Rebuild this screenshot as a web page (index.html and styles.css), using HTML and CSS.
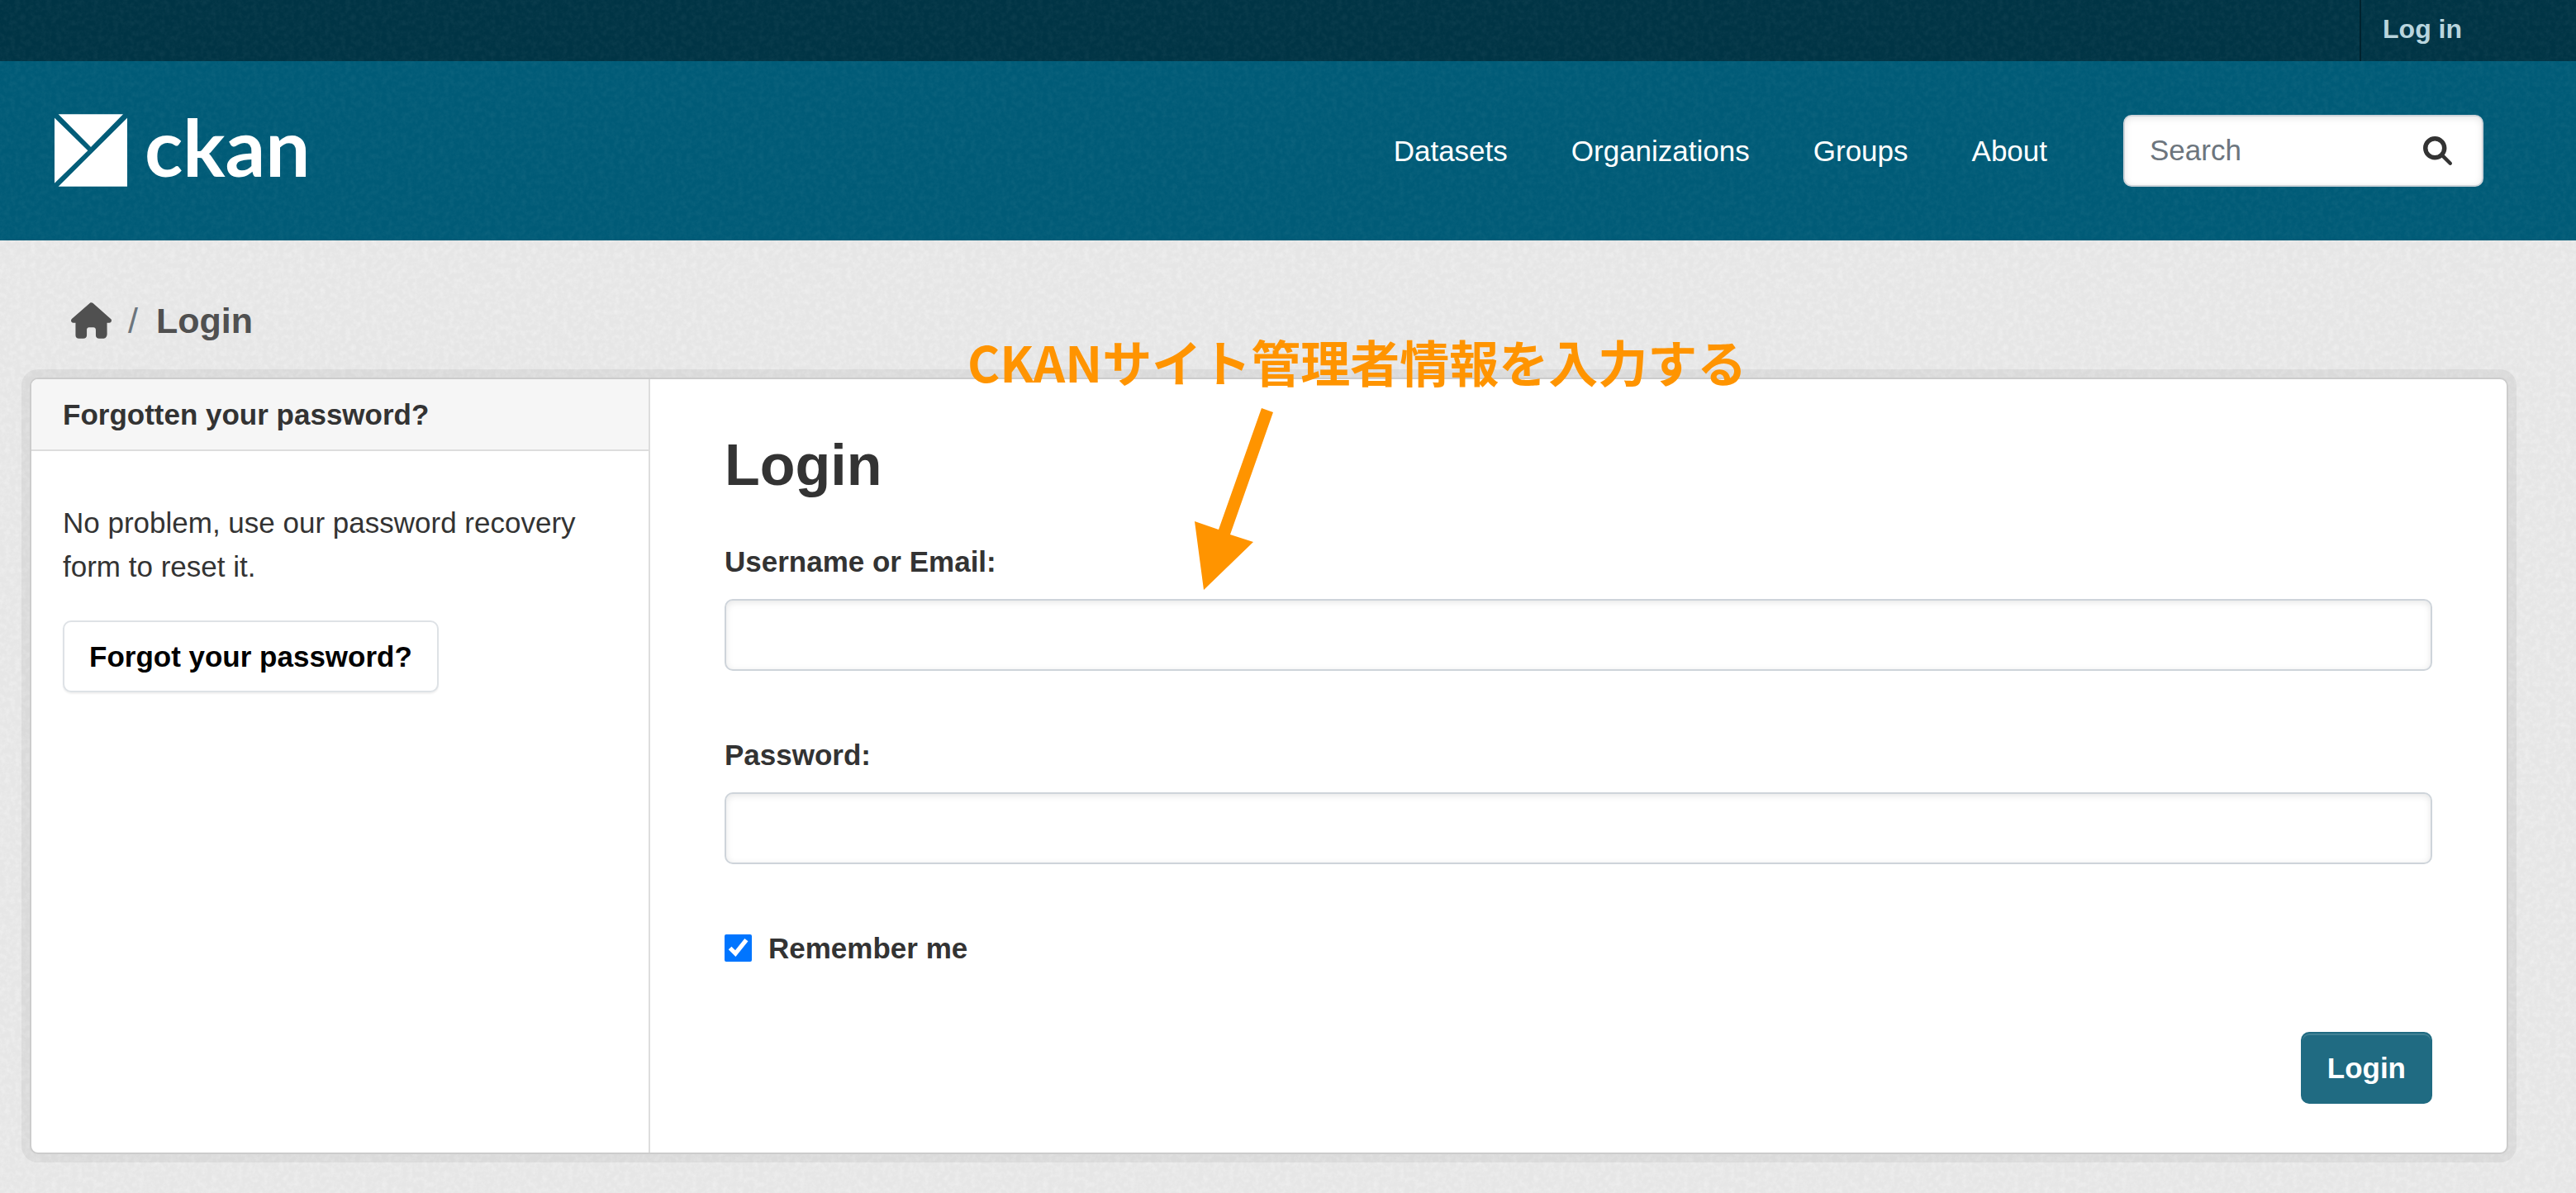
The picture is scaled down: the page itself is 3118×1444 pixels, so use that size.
FILE: index.html
```html
<!DOCTYPE html>
<html lang="en">
<head>
<meta charset="utf-8">
<meta name="viewport" content="width=device-width, initial-scale=1">
<title>Login - CKAN</title>
<link rel="stylesheet" href="styles.css">
</head>
<body>
<div class="account-bar">
  <a class="account-link" href="#">Log in</a>
</div>

<header class="masthead">
  <a class="logo" href="#">
    <svg class="logo-mark" viewBox="0 0 264 264" aria-hidden="true">
      <path d="M14 1H249L132 120ZM0 14L121 133L0 251ZM264 14V263H14Z"/>
    </svg>
    <span class="logo-name">ckan</span>
  </a>
  <div class="masthead-right">
    <nav class="main-nav">
      <a href="#">Datasets</a>
      <a href="#">Organizations</a>
      <a href="#">Groups</a>
      <a href="#">About</a>
    </nav>
    <form class="site-search">
      <input class="search-input" type="search" placeholder="Search" aria-label="Search">
      <button class="search-button" type="button" aria-label="Submit search">
        <svg class="search-icon" viewBox="0 0 512 512" aria-hidden="true">
          <path d="M416 208c0 45.900-14.900 88.300-40 122.700L502.600 457.400c12.500 12.500 12.500 32.800 0 45.300s-32.800 12.500-45.300 0L330.700 376c-34.400 25.200-76.800 40-122.700 40C93.100 416 0 322.900 0 208S93.100 0 208 0S416 93.100 416 208zM208 336a128 128 0 1 0 0-256 128 128 0 1 0 0 256z"/>
        </svg>
      </button>
    </form>
  </div>
</header>

<nav class="toolbar" aria-label="Breadcrumb">
  <a class="home" href="#" aria-label="Home">
    <svg class="home-icon" viewBox="0 0 576 512" aria-hidden="true">
      <path d="M575.800 255.500c0 18-15 32.100-32 32.100h-32l.7 160.200c0 35.300-20 64.200-48 64.200H400c-28 0-48-20-48-44V384c0-17.700-14.300-32-32-32H256c-17.700 0-32 14.300-32 32v84c0 24-20 44-48 44H112c-28 0-48-20-48-48V287.600H32c-18 0-32-14-32-32.100c0-9 3-17 10-24L266.400 8c7-7 15-8 22-8s15 2 21 7L564.800 231.500c8 7 12 15 11 24z"/>
    </svg>
  </a>
  <span class="separator">/</span>
  <a class="crumb" href="#">Login</a>
</nav>

<div class="wrapper">
  <aside class="sidebar">
    <h2 class="sidebar-heading">Forgotten your password?</h2>
    <div class="sidebar-content">
      <p class="sidebar-text">No problem, use our password recovery form to reset it.</p>
      <a class="button button-light" href="#">Forgot your password?</a>
    </div>
  </aside>
  <main class="primary">
    <h1 class="page-heading">Login</h1>
    <form class="login-form">
      <div class="field">
        <label for="username">Username or Email:</label>
        <input class="text-input" id="username" type="text">
      </div>
      <div class="field">
        <label for="password">Password:</label>
        <input class="text-input" id="password" type="password">
      </div>
      <div class="remember">
        <input class="tick" id="remember" type="checkbox" checked>
        <label for="remember">Remember me</label>
      </div>
      <div class="actions">
        <button class="button button-primary" type="button">Login</button>
      </div>
    </form>
    <div class="note">
      <p class="note-text" lang="ja">CKANサイト管理者情報を入力する</p>
      <svg class="note-arrow" viewBox="0 0 96 220" aria-hidden="true">
        <path d="M81 0L95 5L43 153L71 162L11 220L0 137L29 147Z"/>
      </svg>
    </div>
  </main>
</div>
</body>
</html>
```
FILE: styles.css
```css
:root {
  --text: #333;
  --line: #ddd;
  --field-line: #ced4da;
  --grain: url("data:image/svg+xml,%3Csvg xmlns='http://www.w3.org/2000/svg' width='400' height='400'%3E%3Cfilter id='g' x='0' y='0' width='100%25' height='100%25'%3E%3CfeTurbulence type='fractalNoise' baseFrequency='.16' numOctaves='3' seed='4' stitchTiles='stitch'/%3E%3CfeColorMatrix values='0 0 0 0 1 0 0 0 0 1 0 0 0 0 1 1.6 0 0 0 -.62'/%3E%3C/filter%3E%3Crect width='400' height='400' filter='url(%23g)' opacity='.4'/%3E%3C/svg%3E");
  --grain-soft: url("data:image/svg+xml,%3Csvg xmlns='http://www.w3.org/2000/svg' width='400' height='400'%3E%3Cfilter id='g' x='0' y='0' width='100%25' height='100%25'%3E%3CfeTurbulence type='fractalNoise' baseFrequency='.16' numOctaves='3' seed='4' stitchTiles='stitch'/%3E%3CfeColorMatrix values='0 0 0 0 1 0 0 0 0 1 0 0 0 0 1 1.6 0 0 0 -.62'/%3E%3C/filter%3E%3Crect width='400' height='400' filter='url(%23g)' opacity='.05'/%3E%3C/svg%3E");
}

* {
  box-sizing: border-box;
}

body {
  margin: 0;
  background: #e6e6e6 var(--grain);
  color: var(--text);
  font: 35px/53px "Liberation Sans", Arial, sans-serif;
}

a {
  color: inherit;
  text-decoration: none;
}

h1, h2, p {
  margin: 0;
}

svg {
  display: block;
  fill: currentColor;
}

/* Account bar */
.account-bar {
  display: flex;
  justify-content: flex-end;
  padding-right: 112px;
  background: #003445 var(--grain-soft);
}

.account-link {
  padding: 9px 26px 12px;
  border-left: 2px solid #00222e;
  color: #b9d5de;
  font-size: 32px;
  font-weight: bold;
}

/* Masthead */
.masthead {
  display: flex;
  justify-content: space-between;
  align-items: center;
  flex-wrap: wrap;
  padding: 64px 112px 65px 66px;
  background: #005b77 var(--grain-soft);
  color: #fff;
}

.logo {
  display: flex;
  align-items: center;
  gap: 21px;
}

.logo-mark {
  width: 88px;
  height: 88px;
}

.logo-name {
  padding-bottom: 10px;
  font: bold 96px/78px Lato, sans-serif;
}

.masthead-right {
  display: flex;
  align-items: center;
  gap: 92px;
}

.main-nav {
  display: flex;
  gap: 77px;
}

.site-search {
  display: flex;
  align-items: center;
  width: 436px;
  border: 2px solid var(--field-line);
  border-radius: 10px;
  background: #fff;
  box-shadow: inset 0 2px 8px rgba(0, 0, 0, .1);
}

.search-input {
  flex: 1;
  min-width: 0;
  padding: 15px 0 15px 30px;
  border: 0;
  background: none;
  color: var(--text);
  font: inherit;
  height: 83px;
}

.search-input::placeholder {
  color: #6c757d;
  opacity: 1;
}

.search-button {
  padding: 0 36px;
  border: 0;
  background: none;
  color: var(--text);
}

.search-icon {
  width: 35px;
  height: 35px;
}

/* Breadcrumb */
.toolbar {
  display: flex;
  align-items: center;
  padding: 64px 86px 36px;
  color: #505050;
  font-size: 43px;
  line-height: 66px;
}

.home-icon {
  width: 49px;
  height: 44px;
}

.separator {
  padding: 0 22px 0 20px;
  color: #6c757d;
}

.crumb {
  font-weight: bold;
}

/* Card holding the sidebar and the form */
.wrapper {
  display: grid;
  grid-template-columns: 1fr 3fr;
  margin: 0 82px 47px 36px;
  border: 2px solid #ccc;
  border-radius: 10px;
  background: #fff;
  box-shadow: 0 0 0 10px rgba(0, 0, 0, .05);
}

.sidebar {
  border-right: 2px solid var(--line);
}

.sidebar-heading {
  padding: 16px 38px;
  border-bottom: 2px solid var(--line);
  border-top-left-radius: 8px;
  background: #f6f6f6;
  font-size: 35px;
}

.sidebar-content {
  padding: 60px 38px;
}

.sidebar-text {
  margin-bottom: 39px;
}

.button {
  display: inline-block;
  padding: 15px 30px;
  border: 2px solid;
  border-radius: 10px;
  font: bold 35px/53px "Liberation Sans", Arial, sans-serif;
}

.button-light {
  border-color: #dee2e6;
  background: #fff;
  box-shadow: 0 2px 2px rgba(0, 0, 0, .06);
  color: #000;
}

.button-primary {
  border-color: #206b82;
  background: #206b82;
  box-shadow: inset 0 2px 0 rgba(255, 255, 255, .15);
  color: #fff;
}

.primary {
  position: relative;
  padding: 62px 90px 59px;
}

.page-heading {
  margin-bottom: 48px;
  font-size: 70px;
  line-height: 84px;
}

.login-form {
  display: flex;
  flex-direction: column;
  gap: 75px;
}

.field {
  display: flex;
  flex-direction: column;
  gap: 19px;
}

label {
  font-weight: bold;
}

.text-input {
  width: 100%;
  padding: 15px 30px;
  border: 2px solid var(--field-line);
  border-radius: 10px;
  background: #fff;
  box-shadow: inset 0 2px 8px rgba(0, 0, 0, .1);
  color: var(--text);
  font: inherit;
  height: 87px;
}

.remember {
  display: flex;
  align-items: center;
  gap: 20px;
}

.tick {
  width: 33px;
  height: 33px;
  margin: 0;
  accent-color: #0075ff;
}

.actions {
  display: flex;
  justify-content: flex-end;
}

/* Callout laid over the card */
.note {
  position: absolute;
  top: -66px;
  left: 384px;
  color: #ff9400;
}

.note-text {
  font: bold 60px/88px "Noto Sans CJK JP", sans-serif;
  white-space: nowrap;
}

.note-arrow {
  width: 96px;
  height: 220px;
  margin: 13px 0 0 275px;
}
```
